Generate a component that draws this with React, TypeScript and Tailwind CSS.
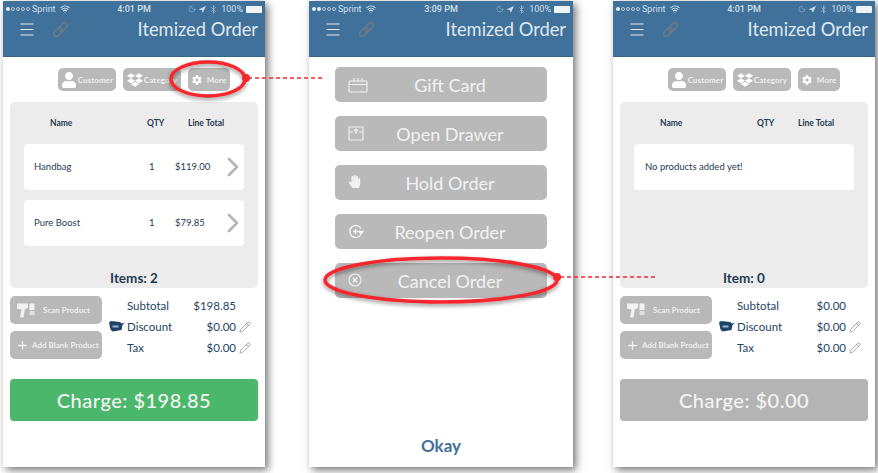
import React from 'react';
import { ChevronRight, Pencil, Plus, Wifi, Moon, Navigation, Bluetooth } from 'lucide-react';
import { FaUser, FaDropbox, FaCog, FaHandPaper } from 'react-icons/fa';

const font = 'font-["Lato","Liberation_Sans",sans-serif]';

const StatusBar: React.FC<{ time: string; dots: number }> = ({ time, dots }) => (
  <div className="grid grid-cols-3 items-center h-[15px] pt-[1px] px-[3px] text-[9px] leading-none text-[#d5e0ea] font-['Roboto',sans-serif]">
    <div className="flex items-center gap-[2px]">
      <div className="flex gap-[1px]">
        {[0, 1, 2, 3, 4].map((i) => (
          <span
            key={i}
            className={i < dots ? 'w-[4px] h-[4px] rounded-full bg-[#e4ebf1]' : 'w-[4px] h-[4px] rounded-full border-[0.5px] border-[#b9cbd9]'}
          />
        ))}
      </div>
      <span>Sprint</span>
      <Wifi size={10} strokeWidth={2.5} className="ml-[2px]" />
    </div>
    <div className="text-center font-medium">{time}</div>
    <div className="flex items-center justify-end gap-[3px]">
      <Moon size={8} className="text-[#8fadc4]" />
      <Navigation size={7} fill="currentColor" />
      <Bluetooth size={9} className="text-[#a9c0d2]" />
      <span>100%</span>
      <span className="w-[16px] h-[7px] rounded-[1px] bg-[#eef3f6]" />
    </div>
  </div>
);

const MenuIcon = () => (
  <svg width="14" height="13" viewBox="0 0 14 13" stroke="#e4ebf1" strokeWidth="1.1">
    <path d="M0.500 1h13M0.500 6.500h13M0.500 12h13" />
  </svg>
);

const ChainIcon = () => (
  <svg width="17" height="17" viewBox="0 0 17 17" fill="none" stroke="#6d7b86" strokeWidth="1.5">
    <rect x="1" y="8.300" width="10" height="5.400" rx="2.700" transform="rotate(-45 6 11)" />
    <rect x="6" y="3.300" width="10" height="5.400" rx="2.700" transform="rotate(-45 11 6)" />
  </svg>
);

const Header: React.FC<{ time: string; dots: number }> = ({ time, dots }) => (
  <div className="h-[56px] shrink-0 bg-[#3f719a] border-b border-[#36648a]">
    <StatusBar time={time} dots={dots} />
    <div className="flex items-center h-[27px] pl-[17px] pr-[7px]">
      <MenuIcon />
      <span className="ml-[18px]">
        <ChainIcon />
      </span>
      <div className="ml-auto pb-[1px] text-[18.3px] leading-none text-[#dfe8ef]">Itemized Order</div>
    </div>
  </div>
);

const ToolButton: React.FC<{ w: string; icon: React.ReactNode; label: string }> = ({ w, icon, label }) => (
  <div className={`${w} h-[23px] flex items-center justify-center gap-[1px] rounded-[5px] bg-[#b9b9b9] text-white`}>
    {icon}
    <span className="text-[8px] font-bold text-[#eeeeee] tracking-[0.1px]">{label}</span>
  </div>
);

const Toolbar = () => (
  <div className="flex gap-[7px] pl-[55px] mt-[11px]">
    <ToolButton w="w-[58px]" icon={<FaUser size={16} />} label="Customer" />
    <ToolButton w="w-[58px]" icon={<FaDropbox size={16} />} label="Category" />
    <ToolButton w="w-[42px] gap-[5px]" icon={<FaCog size={10} />} label="More" />
  </div>
);

const ColumnHead = () => (
  <div className="flex items-center h-[14px] mt-[14px] text-[8.5px] font-bold text-[#1f3b52]">
    <span className="ml-[40px] w-[97px]">Name</span>
    <span className="w-[41px]">QTY</span>
    <span>Line Total</span>
  </div>
);

const ProductRow: React.FC<{ name: string; price: string }> = ({ name, price }) => (
  <div className="flex items-center h-[46px] mx-[14px] pl-[10px] rounded-[4px] bg-white text-[9.5px] text-[#1f3b52]">
    <span className="w-[115px] shrink-0">{name}</span>
    <span className="w-[26px] shrink-0">1</span>
    <span className="w-[56px] shrink-0">{price}</span>
    <ChevronRight size={32} strokeWidth={2} className="shrink-0 text-[#b5b5b5] -ml-[14px]" />
  </div>
);

const Panel: React.FC<{ footer: string; children: React.ReactNode }> = ({ footer, children }) => (
  <div className="flex flex-col h-[186px] mx-[7px] mt-[11px] rounded-[5px] bg-[#ececec]">
    <ColumnHead />
    <div className="flex flex-col gap-[10px] mt-[14px]">{children}</div>
    <div className="mt-auto mb-[2px] text-center text-[13.5px] font-bold leading-[16px] text-[#1f3b52]">{footer}</div>
  </div>
);

const ScanIcon = () => (
  <svg width="18" height="15" viewBox="0 0 18 15" fill="#f2f2f2">
    <path d="M0 0.500h11v4.500l-3 1-1.500 8.500H3l1.500-8L0 5.500z" />
    <rect x="12.500" y="0.500" width="5" height="6.500" />
    <rect x="12.500" y="8" width="5" height="4" opacity="0.7" />
  </svg>
);

const TagIcon = () => (
  <svg width="16" height="11" viewBox="0 0 16 11" fill="#1d4466" className="absolute -left-[18px] top-[5px]">
    <path d="M0 1.500l2-1.500 9 1 2 1.500 3-1-2.500 2.500-1 5-9 1.500-2-2z" />
    <rect x="3.500" y="4.500" width="6" height="2" fill="#9bb6cb" />
  </svg>
);

const SideButton: React.FC<{ icon: React.ReactNode; label: string; pad: string }> = ({ icon, label, pad }) => (
  <div className={`flex items-center h-[28px] w-[92px] rounded-[5px] bg-[#b9b9b9] ${pad}`}>
    {icon}
    <span className="text-[8px] font-bold text-[#eeeeee] whitespace-nowrap">{label}</span>
  </div>
);

const TotalRow: React.FC<{ label: string; value: string; edit?: boolean; tag?: boolean }> = ({ label, value, edit, tag }) => (
  <div className="relative flex items-center h-[21px] text-[11.5px] text-[#1f4563]">
    {tag && <TagIcon />}
    <span>{label}</span>
    <span className="ml-auto w-[48px] text-right">{value}</span>
    <span className="w-[15px] pl-[3px]">{edit && <Pencil size={12} strokeWidth={1} className="text-[#555555]" />}</span>
  </div>
);

const Checkout: React.FC<{ subtotal: string; charge: string; chargeBg: string }> = ({ subtotal, charge, chargeBg }) => (
  <>
    <div className="flex mx-[7px] mt-[8px]">
      <div className="flex flex-col gap-[7px]">
        <SideButton pad="pl-[7px] gap-[8px]" icon={<ScanIcon />} label="Scan Product" />
        <SideButton pad="pl-[6px] gap-[3px]" icon={<Plus size={13} strokeWidth={2.5} className="text-[#f2f2f2]" />} label="Add Blank Product" />
      </div>
      <div className="flex flex-col w-[124px] ml-[25px] mt-[-1px]">
        <TotalRow label="Subtotal" value={subtotal} />
        <TotalRow label="Discount" value="$0.00" edit tag />
        <TotalRow label="Tax" value="$0.00" edit />
      </div>
    </div>
    <div className={`flex items-center justify-center h-[42px] mx-[7px] mt-[20px] rounded-[4px] text-[20px] font-medium text-[#f4f4f4] tracking-[0.5px] ${chargeBg}`}>
      {charge}
    </div>
  </>
);

const MenuButton: React.FC<{ icon: React.ReactNode; label: string }> = ({ icon, label }) => (
  <div className="relative flex items-center justify-center h-[35px] pl-[18px] pt-[2px] rounded-[5px] bg-[#b9b9b9] text-[18px] text-[#f2f2f2]">
    <span className="absolute left-[13px] top-[10px]">{icon}</span>
    {label}
  </div>
);

const GiftIcon = () => (
  <svg width="20" height="16" viewBox="0 0 20 16" fill="none" stroke="#f2f2f2" strokeWidth="1.1">
    <rect x="1" y="4" width="18" height="11" rx="1" />
    <path d="M1 7.500h18M6 1v4M10 1v4M14 1v4" />
  </svg>
);

const DrawerIcon = () => (
  <svg width="16" height="15" viewBox="0 0 16 15" fill="none" stroke="#f2f2f2" strokeWidth="1.1">
    <path d="M1 1h14v13H1zM1 6h4M11 6h4M8 3v5M6 5l2-2 2 2" />
  </svg>
);

const ReopenIcon = () => (
  <svg width="16" height="15" viewBox="0 0 16 15" fill="none" stroke="#f2f2f2" strokeWidth="1.4">
    <path d="M13 10.500A6 6 0 1 1 13 4.500M5 7.500h5M7.500 5v5" />
    <path d="M11 7.500l4 0-2 2.500z" fill="#f2f2f2" />
  </svg>
);

const CancelIcon = () => (
  <svg width="14" height="14" viewBox="0 0 14 14" fill="none" stroke="#f2f2f2" strokeWidth="1.1">
    <circle cx="7" cy="7" r="6" />
    <path d="M4.800 4.800l4.400 4.400M9.200 4.800l-4.400 4.400" strokeWidth="1.400" />
  </svg>
);

const Phone: React.FC<{ w: string; time: string; dots: number; children: React.ReactNode }> = ({ w, time, dots, children }) => (
  <div className={`${w} h-[466px] shrink-0 flex flex-col bg-white shadow-[3px_3px_8px_rgba(0,0,0,0.55)]`}>
    <Header time={time} dots={dots} />
    {children}
  </div>
);

// red call-outs drawn over the three screens
const Annotations = () => (
  <svg width="878" height="473" viewBox="0 0 878 473" fill="none" className="absolute left-0 top-0 pointer-events-none">
    <defs>
      <filter id="callout" x="-10%" y="-30%" width="120%" height="170%">
        <feDropShadow dx="0" dy="2" stdDeviation="2" floodColor="#000000" floodOpacity="0.45" />
      </filter>
    </defs>
    <g stroke="#f5282d" strokeWidth="3.5" filter="url(#callout)">
      <ellipse cx="208" cy="79" rx="37" ry="17" />
      <ellipse cx="441" cy="280" rx="116" ry="22" />
    </g>
    <g stroke="#f5282d" strokeWidth="1.5" strokeDasharray="4 3">
      <line x1="248" y1="78" x2="325" y2="78" />
      <line x1="560" y1="277" x2="655" y2="277" />
    </g>
    <circle cx="246" cy="78" r="4" fill="#f5282d" />
    <circle cx="557" cy="277" r="4" fill="#f5282d" />
  </svg>
);

export default function App() {
  return (
    <div className={`relative w-[878px] h-[473px] overflow-hidden bg-white pt-[1px] pl-[3px] flex items-start ${font}`}>
      <Phone w="w-[262px]" time="4:01 PM" dots={1}>
        <Toolbar />
        <Panel footer="Items: 2">
          <ProductRow name="Handbag" price="$119.00" />
          <ProductRow name="Pure Boost" price="$79.85" />
        </Panel>
        <Checkout subtotal="$198.85" charge="Charge: $198.85" chargeBg="bg-[#4bb76b]" />
      </Phone>

      <div className="ml-[44px]">
        <Phone w="w-[264px]" time="3:09 PM" dots={2}>
          <div className="flex flex-col gap-[14px] mx-[26px] mt-[10px]">
            <MenuButton icon={<GiftIcon />} label="Gift Card" />
            <MenuButton icon={<DrawerIcon />} label="Open Drawer" />
            <MenuButton icon={<FaHandPaper size={13} />} label="Hold Order" />
            <MenuButton icon={<ReopenIcon />} label="Reopen Order" />
            <MenuButton icon={<CancelIcon />} label="Cancel Order" />
          </div>
          <div className="mt-auto mb-[10px] text-center text-[17px] font-bold leading-[22px] text-[#3f719a]">Okay</div>
        </Phone>
      </div>

      <div className="ml-[40px]">
        <Phone w="w-[262px]" time="4:01 PM" dots={1}>
          <Toolbar />
          <Panel footer="Item: 0">
            <div className="flex items-center h-[46px] mx-[14px] pl-[11px] rounded-[4px] bg-white text-[9.5px] text-[#1f3b52]">
              No products added yet!
            </div>
          </Panel>
          <Checkout subtotal="$0.00" charge="Charge: $0.00" chargeBg="bg-[#b4b4b4]" />
        </Phone>
      </div>

      <Annotations />
    </div>
  );
}
